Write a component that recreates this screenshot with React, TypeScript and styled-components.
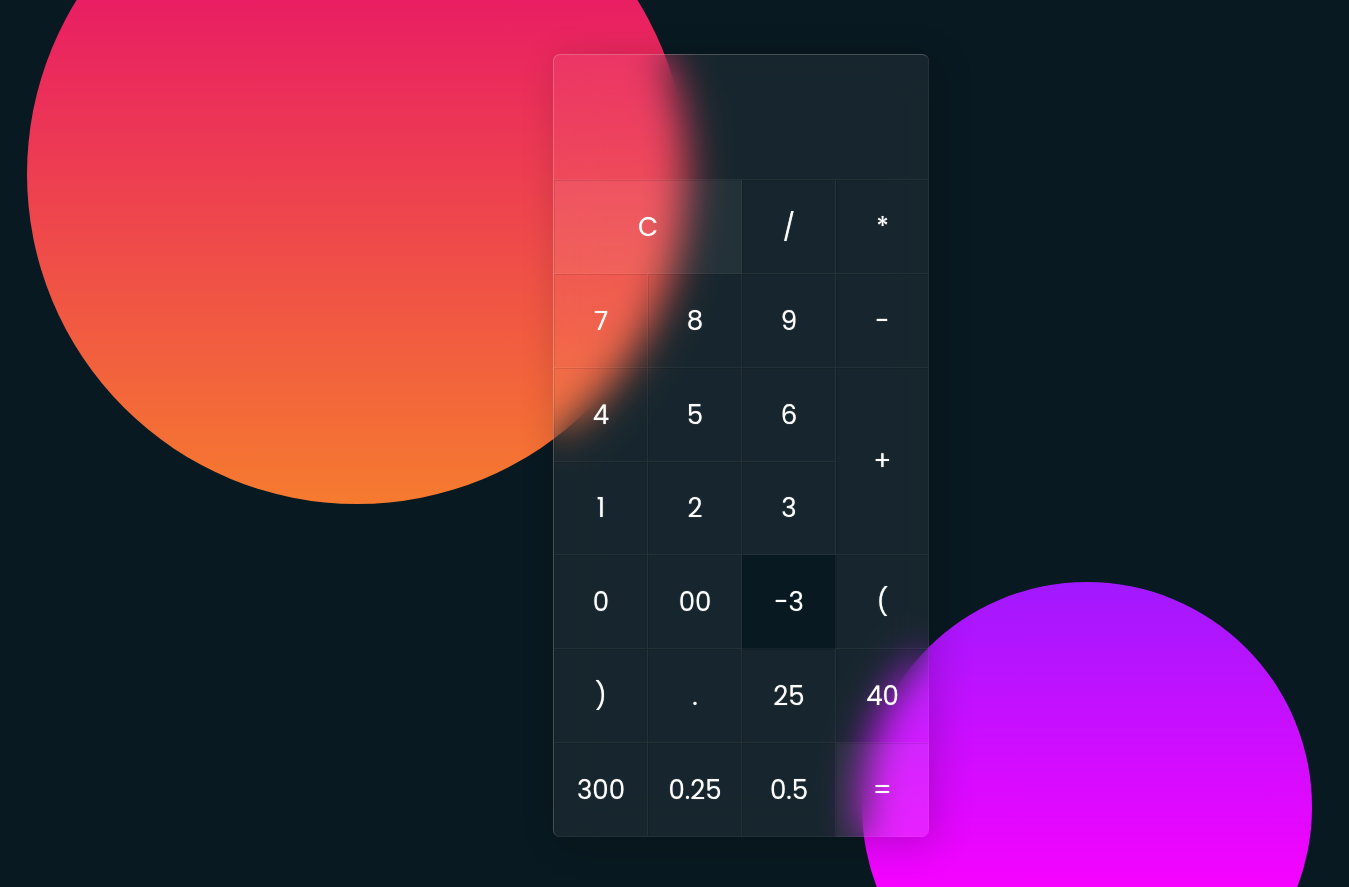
import React, { useState } from "react";
import styled, { createGlobalStyle, css } from "styled-components";

const GlobalStyle = createGlobalStyle`
  *, *::before, *::after { box-sizing: border-box; }
  body {
    margin: 0;
    background: #091921;
    font-family: Poppins, Inter, "Liberation Sans", sans-serif;
  }
`;

const Page = styled.main`
  position: relative;
  overflow: hidden;
  display: flex;
  justify-content: center;
  min-height: 100vh;
  padding: 54px 0 50px 133px;
  background: #091921;

  &::before,
  &::after {
    content: "";
    position: absolute;
    inset: 0;
  }
  &::before {
    background: linear-gradient(#e91e63, #ffc107);
    clip-path: circle(330px at 357px 174px);
  }
  &::after {
    background: linear-gradient(#0044ff, #ff00ff 104%);
    clip-path: circle(225px at 1087px 807px);
  }
`;

const Calculator = styled.form`
  position: relative;
  z-index: 1;
  display: grid;
  grid-template-columns: repeat(3, 94px) 1fr;
  grid-template-rows: 125px repeat(3, 94px) 93px repeat(3, 94px);
  align-self: flex-start;
  width: 376px;
  overflow: hidden;
  border-top: 1px solid rgba(255, 255, 255, 0.2);
  border-left: 1px solid rgba(255, 255, 255, 0.2);
  border-radius: 7px;
  background: rgba(255, 255, 255, 0.06);
  box-shadow: 6px 6px 38px rgba(0, 0, 0, 0.2);
  backdrop-filter: blur(20px);
`;

const Display = styled.input`
  grid-column: span 4;
  width: 100%;
  padding: 12px;
  border: 0;
  border-right: 1px solid rgba(255, 255, 255, 0.05);
  border-bottom: 1px solid rgba(255, 255, 255, 0.05);
  border-radius: 0;
  outline: none;
  background: transparent;
  color: #fff;
  font: inherit;
  font-size: 38px;
  text-align: right;
`;

type Kind = "plain" | "wide" | "tall" | "accent" | "active";

const Key = styled.button<{ $kind: Kind }>`
  display: flex;
  align-items: center;
  justify-content: center;
  min-width: 0;
  padding: 1px 0 0 1px;
  border: 0;
  border-right: 1px solid rgba(255, 255, 255, 0.05);
  border-bottom: 1px solid rgba(255, 255, 255, 0.05);
  background: transparent;
  box-shadow: inset 1px 1px 0 rgba(0, 0, 0, 0.1);
  color: #fff;
  font: inherit;
  font-size: 26px;
  text-shadow: 0 0 1px rgba(255, 255, 255, 0.5);
  cursor: pointer;

  ${({ $kind }) =>
    $kind === "wide" &&
    css`
      grid-column: span 2;
      background: rgba(255, 255, 255, 0.05);
    `}
  ${({ $kind }) =>
    $kind === "tall" &&
    css`
      grid-row: span 2;
    `}
  ${({ $kind }) =>
    $kind === "accent" &&
    css`
      background: rgba(255, 255, 255, 0.05);
    `}
  ${({ $kind }) =>
    $kind === "active" &&
    css`
      background: #091921;
    `}
`;

const keys: { label: string; kind?: Kind }[] = [
  { label: "C", kind: "wide" },
  { label: "/" },
  { label: "*" },
  { label: "7" },
  { label: "8" },
  { label: "9" },
  { label: "-" },
  { label: "4" },
  { label: "5" },
  { label: "6" },
  { label: "+", kind: "tall" },
  { label: "1" },
  { label: "2" },
  { label: "3" },
  { label: "0" },
  { label: "00" },
  { label: "-3", kind: "active" },
  { label: "(" },
  { label: ")" },
  { label: "." },
  { label: "25" },
  { label: "40" },
  { label: "300" },
  { label: "0.25" },
  { label: "0.5" },
  { label: "=", kind: "accent" },
];

// Reads an arithmetic expression with + - * / and brackets.
function evaluate(text: string): string {
  let at = 0;
  const factor = (): number => {
    if (text[at] === "-") {
      at += 1;
      return -factor();
    }
    if (text[at] === "(") {
      at += 1;
      const inner = sum();
      at += 1;
      return inner;
    }
    const start = at;
    while (/[0-9.]/.test(text[at] ?? "")) at += 1;
    return Number(text.slice(start, at) || NaN);
  };
  const product = (): number => {
    let left = factor();
    while (text[at] === "*" || text[at] === "/") {
      const sign = text[at++];
      const right = factor();
      left = sign === "*" ? left * right : left / right;
    }
    return left;
  };
  const sum = (): number => {
    let left = product();
    while (text[at] === "+" || text[at] === "-") {
      const sign = text[at++];
      const right = product();
      left = sign === "+" ? left + right : left - right;
    }
    return left;
  };
  return text ? String(sum()) : "";
}

export default function App() {
  const [value, setValue] = useState("");

  const press = (label: string) => {
    if (label === "C") setValue("");
    else if (label === "=") setValue(evaluate(value));
    else setValue(value + label);
  };

  return (
    <>
      <GlobalStyle />
      <Page>
        <Calculator onSubmit={(event) => event.preventDefault()}>
          <Display type="text" aria-label="Result" readOnly value={value} />
          {keys.map(({ label, kind = "plain" }) => (
            <Key key={label} type="button" $kind={kind} onClick={() => press(label)}>
              {label}
            </Key>
          ))}
        </Calculator>
      </Page>
    </>
  );
}
